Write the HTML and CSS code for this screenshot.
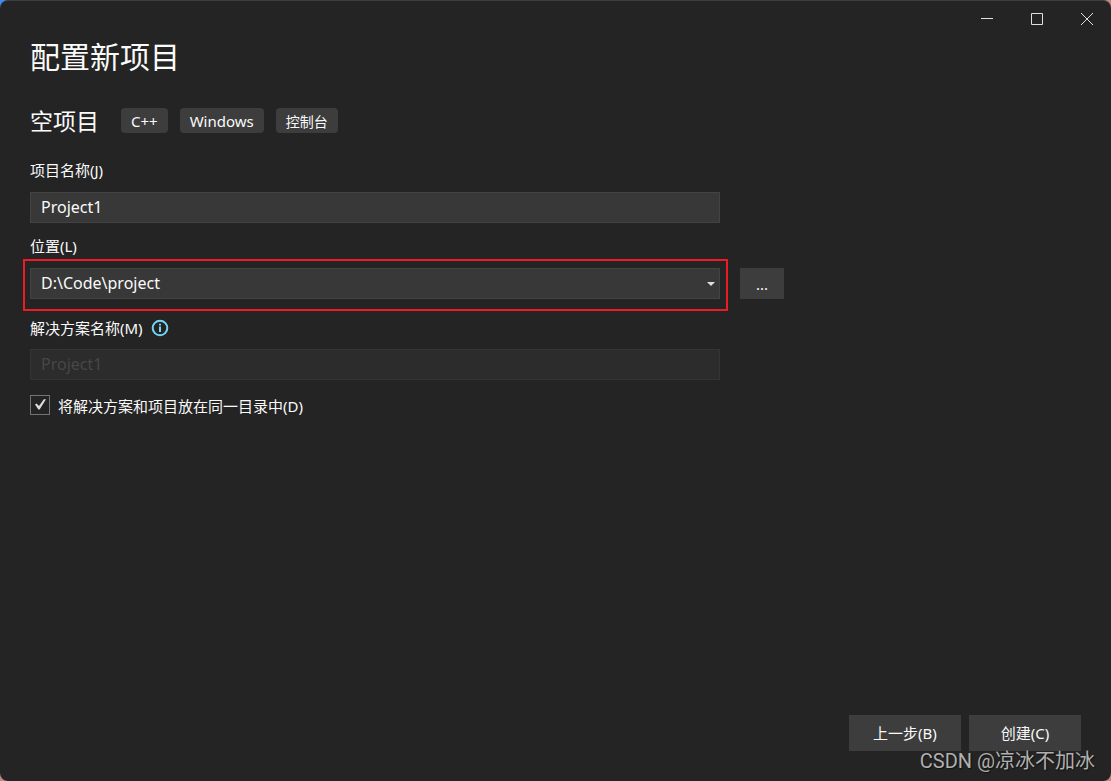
FILE: index.html
```html
<!DOCTYPE html>
<html lang="zh-CN">
<head>
<meta charset="UTF-8" />
<meta name="viewport" content="width=device-width, initial-scale=1.0" />
<title>配置新项目</title>
<link rel="stylesheet" href="styles.css">
</head>
<body>
<div class="window">
    <div class="titlebar">
        <button type="button" class="winbtn" aria-label="最小化">
            <svg width="14" height="14" viewBox="0 0 14 14"><path d="M1 6.5h12" /></svg>
        </button>
        <button type="button" class="winbtn" aria-label="最大化">
            <svg width="14" height="14" viewBox="0 0 14 14"><path d="M1.5 1.5h11v11h-11z" /></svg>
        </button>
        <button type="button" class="winbtn" aria-label="关闭">
            <svg width="14" height="14" viewBox="0 0 14 14"><path d="M1 1l12 12M13 1L1 13" /></svg>
        </button>
    </div>

    <form class="content">
        <h1>配置新项目</h1>
        <div class="template">
            <h2>空项目</h2>
            <ul class="tags">
                <li>C++</li>
                <li>Windows</li>
                <li class="cjk">控制台</li>
            </ul>
        </div>

        <div class="fields">
            <div class="field">
                <label for="name">项目名称(J)</label>
                <input class="textbox" type="text" id="name" value="Project1">
            </div>
            <div class="field">
                <label for="location">位置(L)</label>
                <div class="combo">
                    <select class="textbox" id="location">
                        <option>D:\Code\project</option>
                    </select>
                    <svg class="arrow" width="8" height="4" viewBox="0 0 8 4"><path d="M0 0h8L4 4z" /></svg>
                </div>
            </div>
            <button type="button" class="btn browse">...</button>
            <div class="field solution">
                <div class="labelrow">
                    <label for="solution">解决方案名称(M)</label>
                    <svg class="info" width="18" height="18" viewBox="0 0 18 18">
                        <circle cx="9" cy="9" r="7.3" />
                        <path d="M9 7.5v5.5M9 4.7v1.8" />
                    </svg>
                </div>
                <input class="textbox" type="text" id="solution" value="Project1" disabled>
            </div>
            <div class="check">
                <input type="checkbox" id="samedir" checked>
                <svg class="tick" width="20" height="20" viewBox="0 0 20 20"><path d="M5 9.6l1.6-1.2L9 11l4.8-6.8H16L9.6 14.4H8.4z" /></svg>
                <label for="samedir">将解决方案和项目放在同一目录中(D)</label>
            </div>
        </div>

        <div class="actions">
            <button type="button" class="btn">上一步(B)</button>
            <button type="submit" class="btn">创建(C)</button>
        </div>
    </form>
    <div class="watermark">CSDN @凉冰不加冰</div>
</div>
</body>
</html>
```
FILE: styles.css
```css
* {
    box-sizing: border-box;
}
html, body {
    height: 100%;
    margin: 0;
}
body {
    background: linear-gradient(to bottom right, #3f8cf4 10%, #c08880 50%);
    color: #fafafa;
    font: 15px/20px "Noto Sans", "Noto Sans CJK SC", sans-serif;
}
h1, h2, ul {
    margin: 0;
    padding: 0;
    font-weight: normal;
}
button, input, select {
    margin: 0;
    border: 0;
    color: inherit;
    font: inherit;
}

.window {
    position: relative;
    display: flex;
    flex-direction: column;
    min-height: 100%;
    background: #242424;
    border-top: 1px solid #3e3e3e;
    border-radius: 8px;
}

/* caption buttons */
.titlebar {
    display: flex;
    justify-content: flex-end;
}
.winbtn {
    display: flex;
    align-items: center;
    justify-content: center;
    width: 50px;
    height: 36px;
    padding: 0 0 0 2px;
    background: none;
}
.winbtn svg {
    fill: none;
    stroke: #e0e0e0;
}

.content {
    display: flex;
    flex-direction: column;
    flex: 1;
    padding: 0 30px 30px;
}
h1 {
    font-size: 30px;
    line-height: 40px;
}
.template {
    display: flex;
    align-items: center;
    gap: 22px;
    margin: 31px 0 27px;
}
h2 {
    padding-top: 2px;
    font-size: 23px;
    line-height: 23px;
}
.tags {
    display: flex;
    gap: 12px;
    list-style: none;
}
.tags li {
    padding: 2px 10px 0;
    border-radius: 4px;
    background: #3d3d3d;
    line-height: 23px;
}
.tags .cjk {
    font-size: 14px;
}

/* fields on the left, browse button beside the location */
.fields {
    display: grid;
    grid-template-columns: minmax(0, 690px) 44px;
    column-gap: 20px;
    row-gap: 13px;
}
.field {
    display: flex;
    flex-direction: column;
    grid-column: 1;
    gap: 12px;
}
.solution {
    gap: 11px;
    margin-top: 6px;
}
.labelrow {
    display: flex;
    align-items: center;
    gap: 8px;
}
.info {
    fill: none;
    stroke: #75d5f5;
    stroke-width: 2;
}
.textbox {
    display: block;
    width: 100%;
    height: 31px;
    padding: 0 10px 2px;
    background: #383838;
    border: 1px solid #434343;
    border-radius: 0;
    appearance: none;
    font-size: 16px;
}
.textbox:disabled {
    background: #2c2c2c;
    border-color: #343434;
    color: #474747;
    opacity: 1;
}
.combo {
    position: relative;
}
.combo::after {
    content: "";
    position: absolute;
    inset: -9px -8px -12px -7px;
    border: 2px solid #ed1c24;
    pointer-events: none;
}
.arrow {
    position: absolute;
    top: 14px;
    right: 5px;
    fill: #e0e0e0;
    pointer-events: none;
}

.check {
    position: relative;
    display: flex;
    grid-column: 1;
    gap: 8px;
    margin-top: 2px;
}
.check input {
    flex: none;
    width: 20px;
    height: 20px;
    border: 1px solid #747474;
    appearance: none;
}
.check label {
    padding-top: 1px;
}
.tick {
    position: absolute;
    left: 0;
    fill: #dcdcdc;
    visibility: hidden;
    pointer-events: none;
}
.check input:checked + .tick {
    visibility: visible;
}

.btn {
    padding: 0;
    background: #3d3d3d;
}
.browse {
    align-self: end;
    height: 31px;
}
.actions {
    display: flex;
    justify-content: flex-end;
    gap: 8px;
    margin-top: auto;
}
.actions .btn {
    width: 112px;
    height: 36px;
}

.watermark {
    position: absolute;
    right: 16px;
    bottom: 6px;
    color: #b0b0b0;
    font: 20px/28px Roboto, "Noto Sans CJK SC", sans-serif;
    text-shadow: 1px 1px 1px #111;
}
```
